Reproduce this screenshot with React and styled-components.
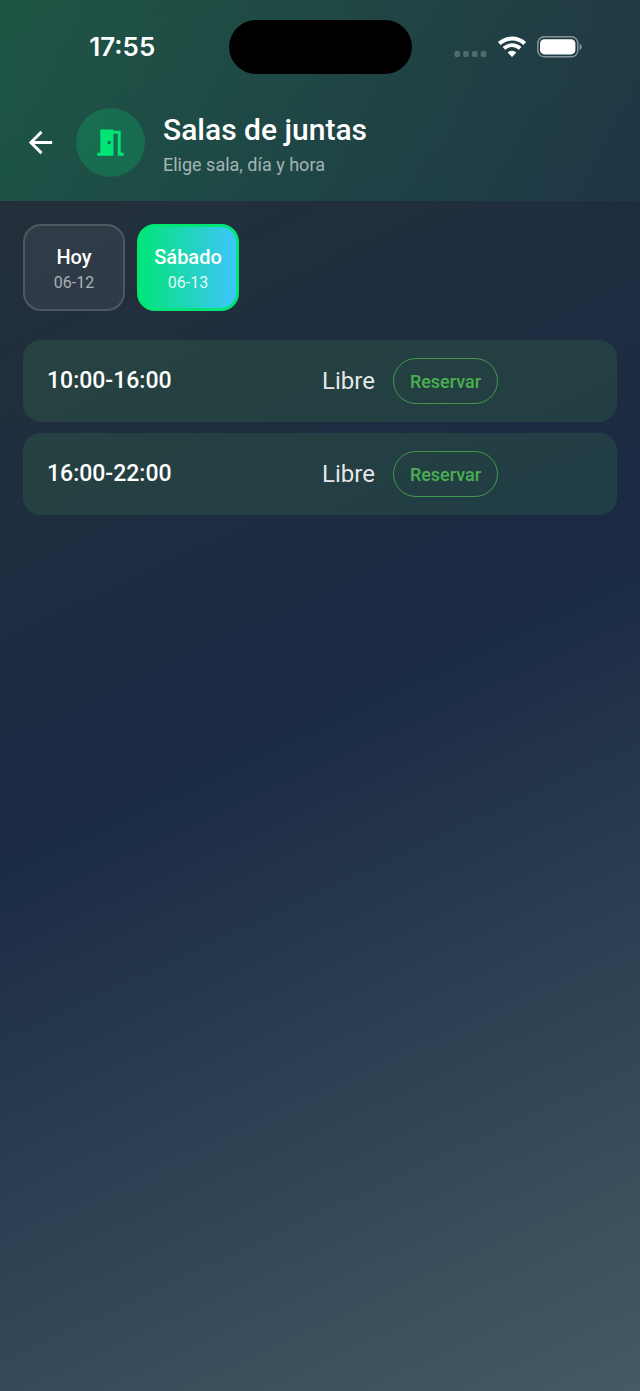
import React, { useState } from 'react';
import styled, { createGlobalStyle } from 'styled-components';
import { MdArrowBack, MdMeetingRoom } from 'react-icons/md';

const GlobalStyle = createGlobalStyle`
    * {
        box-sizing: border-box;
    }

    body {
        margin: 0;
        font-family: Roboto, 'Liberation Sans', sans-serif;
        color: #ffffff;
    }
`;

const Page = styled.div`
    min-height: 100vh;
    background: linear-gradient(155deg, #263238 0%, #1a2a44 50%, #455a64 100%);
`;

const Header = styled.header`
    padding-bottom: 24px;
    background: linear-gradient(
        107deg,
        rgba(0, 230, 118, 0.2) 0%,
        rgba(32, 210, 190, 0.05) 100%
    );
`;

const StatusBar = styled.div`
    display: grid;
    grid-template-columns: 1fr 183px 1fr;
    align-items: center;
    justify-items: center;
    padding: 20px 16px 33px;
`;

const Clock = styled.div`
    font-family: Inter, sans-serif;
    font-size: 26px;
    line-height: 32px;
    font-weight: 600;
`;

const Island = styled.div`
    width: 100%;
    height: 54px;
    border-radius: 27px;
    background-color: #000000;
`;

const StatusIcons = styled.div`
    display: flex;
    gap: 11px;

    svg {
        display: block;
    }
`;

const TitleBar = styled.div`
    display: flex;
    align-items: center;
    gap: 18px;
    padding: 0 23px;
`;

const BackButton = styled.button`
    display: flex;
    padding: 0;
    border: none;
    background: none;
    color: #ffffff;
    cursor: pointer;
`;

const RoomBadge = styled.div`
    display: flex;
    align-items: center;
    justify-content: center;
    width: 69px;
    height: 69px;
    border-radius: 50%;
    background-color: rgba(0, 230, 118, 0.2);
    color: #00e676;
`;

const Title = styled.h1`
    margin: 0;
    font-size: 30px;
    line-height: 46px;
    font-weight: 500;
`;

const Subtitle = styled.p`
    margin: 0;
    font-size: 18px;
    line-height: 24px;
    color: rgba(255, 255, 255, 0.6);
`;

const Content = styled.main`
    padding: 23px;
`;

const DayList = styled.div`
    display: flex;
    gap: 12px;
    margin-bottom: 29px;
`;

const DayButton = styled.button`
    display: flex;
    flex-direction: column;
    align-items: center;
    justify-content: center;
    width: 102px;
    height: 87px;
    padding: 4px 0 0;
    border: ${({ $active }) =>
        $active ? '3px solid #00e676' : '2px solid rgba(255, 255, 255, 0.15)'};
    border-radius: 18px;
    background: ${({ $active }) =>
        $active
            ? 'linear-gradient(90deg, #00e676, #40c4ff) border-box'
            : 'rgba(255, 255, 255, 0.06)'};
    color: #ffffff;
    font-family: inherit;
    cursor: pointer;
`;

const DayName = styled.span`
    font-size: 20px;
    line-height: 26px;
    font-weight: 500;
`;

const DayDate = styled.span`
    font-size: 16px;
    line-height: 26px;
    color: ${({ $active }) =>
        $active ? 'rgba(255, 255, 255, 0.9)' : 'rgba(255, 255, 255, 0.6)'};
`;

const SlotList = styled.div`
    display: flex;
    flex-direction: column;
    gap: 11px;
`;

const Slot = styled.div`
    display: grid;
    grid-template-columns: 1fr 1fr;
    column-gap: 4px;
    align-items: center;
    padding: 18px 24px;
    border-radius: 18px;
    background-color: rgba(76, 175, 80, 0.15);
`;

const SlotTime = styled.div`
    font-size: 23px;
    line-height: 32px;
    font-weight: 500;
`;

const SlotStatus = styled.div`
    display: flex;
    align-items: center;
    gap: 18px;
    font-size: 24px;
    line-height: 32px;
    color: rgba(255, 255, 255, 0.9);
`;

const ReserveButton = styled.button`
    height: 46px;
    padding: 0 16px;
    border: 1px solid rgba(76, 175, 80, 0.8);
    border-radius: 23px;
    background: none;
    color: #4caf50;
    font-family: inherit;
    font-size: 18px;
    font-weight: 500;
    cursor: pointer;
`;

const days = [
    { name: 'Hoy', date: '06-12' },
    { name: 'Sábado', date: '06-13' },
];

const slots = ['10:00-16:00', '16:00-22:00'];

const SignalIcon = () => (
    <svg width="33" height="22" viewBox="0 0 33 22" fill="#fff" fillOpacity="0.22">
        {[0.4, 9.2, 18, 26.8].map((x) => (
            <rect key={x} x={x} y="15" width="5.6" height="6" rx="1.8" />
        ))}
    </svg>
);

const WifiIcon = () => (
    <svg width="28" height="22" viewBox="0 0 28 22" fill="none" stroke="#fff">
        <path d="M1.3 7.6a18.5 18.5 0 0 1 25.4 0" strokeWidth="4" />
        <path d="M5.9 12.4a11.8 11.8 0 0 1 16.2 0" strokeWidth="3.8" />
        <path
            d="M14 21l-4.4-4.4a6.4 6.4 0 0 1 8.8 0z"
            fill="#fff"
            stroke="none"
        />
    </svg>
);

const BatteryIcon = () => (
    <svg width="45" height="22" viewBox="0 0 45 22" fill="none">
        <rect
            x="0.8"
            y="0.8"
            width="40"
            height="20"
            rx="6.4"
            stroke="#fff"
            strokeOpacity="0.45"
            strokeWidth="1.5"
        />
        <rect x="3" y="3.2" width="35.4" height="15.2" rx="4.4" fill="#fff" />
        <path d="M42.6 7.4a3.8 3.8 0 0 1 0 6.8z" fill="#fff" fillOpacity="0.5" />
    </svg>
);

function App() {
    const [activeDay, setActiveDay] = useState(1);

    return (
        <>
            <GlobalStyle />
            <Page>
                <Header>
                    <StatusBar>
                        <Clock>17:55</Clock>
                        <Island />
                        <StatusIcons>
                            <SignalIcon />
                            <WifiIcon />
                            <BatteryIcon />
                        </StatusIcons>
                    </StatusBar>
                    <TitleBar>
                        <BackButton aria-label="Volver">
                            <MdArrowBack size={35} />
                        </BackButton>
                        <RoomBadge>
                            <MdMeetingRoom size={35} />
                        </RoomBadge>
                        <div>
                            <Title>Salas de juntas</Title>
                            <Subtitle>Elige sala, día y hora</Subtitle>
                        </div>
                    </TitleBar>
                </Header>
                <Content>
                    <DayList>
                        {days.map(({ name, date }, index) => (
                            <DayButton
                                key={date}
                                $active={index === activeDay}
                                aria-pressed={index === activeDay}
                                onClick={() => setActiveDay(index)}
                            >
                                <DayName>{name}</DayName>
                                <DayDate $active={index === activeDay}>{date}</DayDate>
                            </DayButton>
                        ))}
                    </DayList>
                    <SlotList>
                        {slots.map((slot) => (
                            <Slot key={slot}>
                                <SlotTime>{slot}</SlotTime>
                                <SlotStatus>
                                    Libre
                                    <ReserveButton>Reservar</ReserveButton>
                                </SlotStatus>
                            </Slot>
                        ))}
                    </SlotList>
                </Content>
            </Page>
        </>
    );
}

export default App;
